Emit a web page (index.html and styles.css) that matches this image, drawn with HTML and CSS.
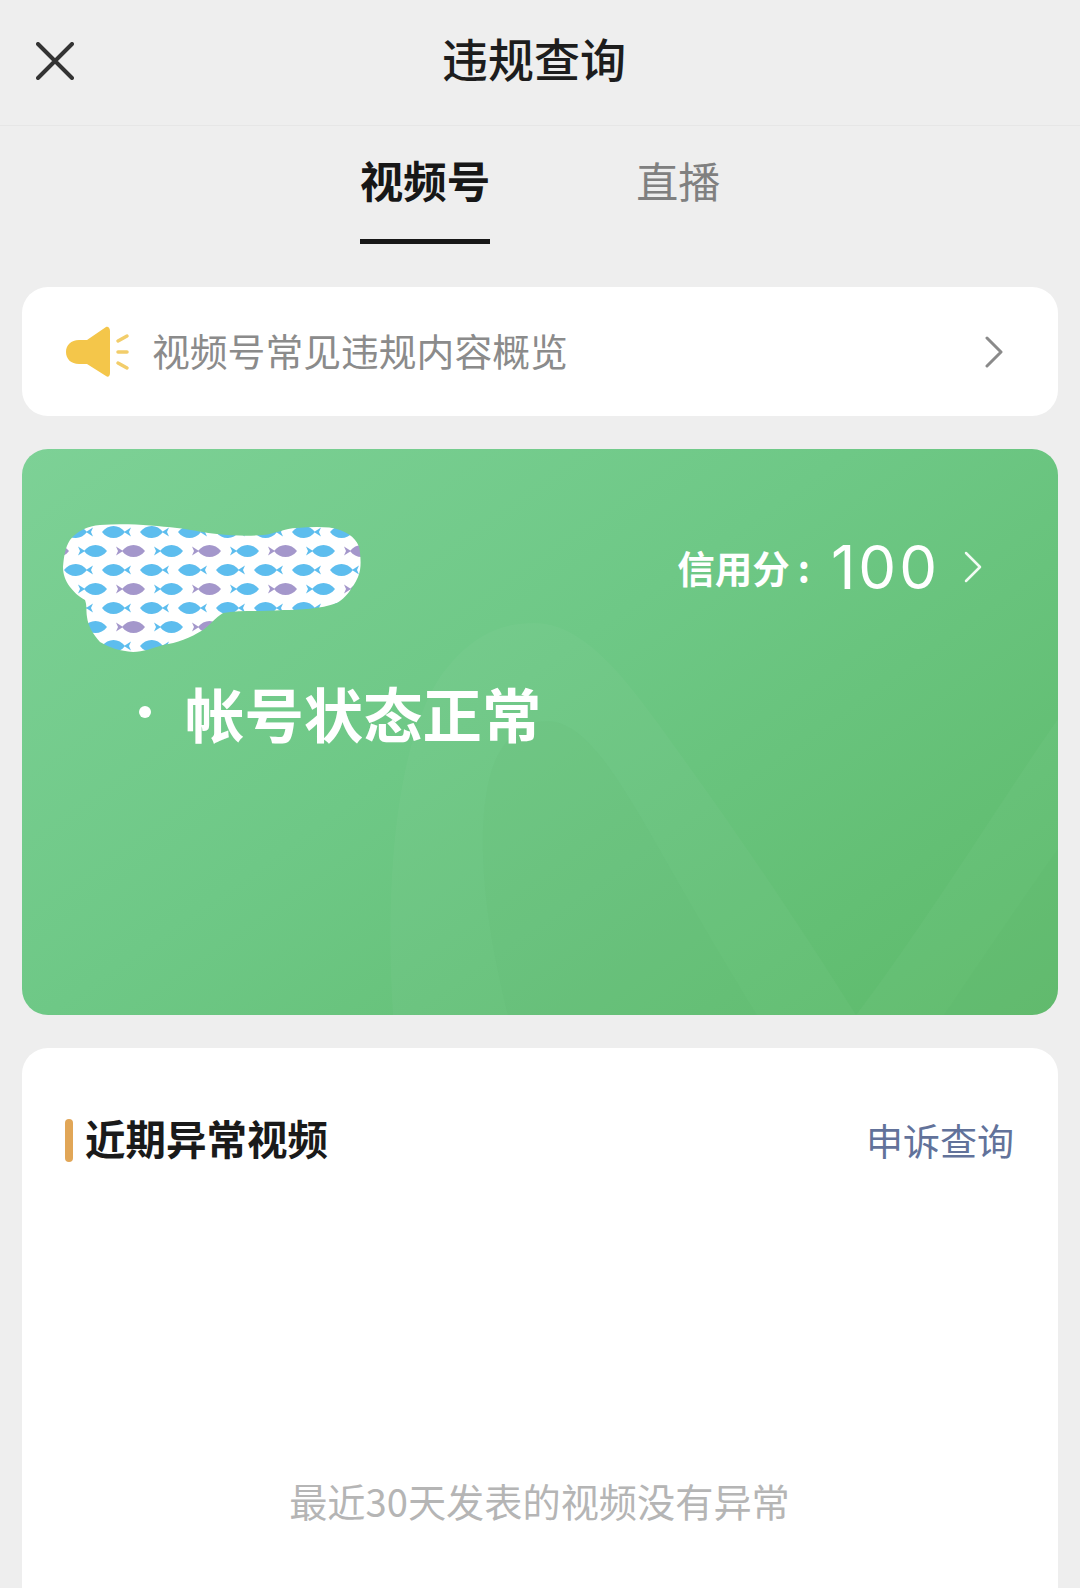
FILE: index.html
```html
<!DOCTYPE html>
<html lang="zh-CN">
<head>
<meta charset="utf-8">
<title>违规查询</title>
<link rel="stylesheet" href="styles.css">
</head>
<body>
<div class="page">
  <header class="topbar">
    <svg class="close" viewBox="0 0 38 38" aria-label="关闭"><path d="M2 2 L36 36 M36 2 L2 36"/></svg>
    <h1 class="title">违规查询</h1>
  </header>

  <nav class="tabs">
    <a class="tab tab-active">视频号</a>
    <a class="tab">直播</a>
  </nav>

  <main class="content">
    <section class="card notice">
      <svg class="horn" viewBox="0 0 64 52">
        <path class="horn-body" d="M40 1 C42 0 44 2 44 5 L44 47 C44 50 42 52 40 50 L21 38 L13 38 C5 38 0 33 0 26 C0 19 5 14 13 14 L21 14 Z"/>
        <path class="horn-ray" d="M52 15 L61 10 M52 26 L61 26 M52 37 L61 42"/>
      </svg>
      <span class="notice-text">视频号常见违规内容概览</span>
      <svg class="chev chev-grey" viewBox="0 0 18 32"><path d="M2 2 L16 16 L2 30"/></svg>
    </section>

    <section class="status">
      <svg class="status-bg" viewBox="0 0 1036 566" preserveAspectRatio="none">
        <path class="wave-light" d="M371 566 C362 430 375 290 420 225 C450 185 480 174 512 174 C560 174 600 225 640 280 C720 390 780 480 834 566 Z"/>
        <path class="wave-dark" d="M486 566 C462 470 452 380 470 320 C482 285 505 272 525 272 C560 272 590 320 620 370 C660 440 700 510 735 566 Z"/>
        <path class="wave-light" d="M834 566 C900 480 980 350 1036 270 L1036 566 Z"/>
        <path class="wave-dark" d="M922 566 C960 510 1000 450 1036 400 L1036 566 Z"/>
      </svg>
      <div class="status-top">
        <svg class="blob" viewBox="0 0 320 150">
          <defs>
            <path id="fish" d="M0 0 C6 -8 17 -8 23 0 C17 8 6 8 0 0 Z M22 0 L29 -4.5 L27 0 L29 4.5 Z"/>
            <pattern id="fishes" x="26" y="16" width="76" height="38" patternUnits="userSpaceOnUse">
              <rect width="76" height="38" fill="#fff"/>
              <use href="#fish" class="fish-blue" x="-12" y="6"/>
              <use href="#fish" class="fish-blue" x="26" y="6"/>
              <use href="#fish" class="fish-blue" x="64" y="6"/>
              <use href="#fish" class="fish-blue" transform="translate(31 25) scale(-1 1)"/>
              <use href="#fish" class="fish-purple" transform="translate(69 25) scale(-1 1)"/>
            </pattern>
          </defs>
          <path fill="url(#fishes)" d="M50 15 C80 13 105 16 127 18 C145 20 155 23 167 24 C185 26 200 26 213 25 C225 24 235 18 247 18 C262 17 278 16 290 20 C303 25 310 33 310 43 C311 52 311 60 308 67 C302 80 295 88 287 93 C270 99 250 100 233 100 C210 102 190 100 173 103 C165 108 160 115 153 120 C140 128 127 133 113 135 C103 138 93 142 83 142 C70 141 60 138 50 132 C43 124 38 116 37 107 C36 100 37 95 35 90 C28 86 24 82 20 77 C15 70 13 64 13 57 C14 46 15 38 20 30 C27 21 38 16 50 15 Z"/>
        </svg>
        <div class="score">
          <span class="score-label">信用分<span class="score-colon">:</span></span>
          <span class="score-num">100</span>
          <svg class="chev chev-white" viewBox="0 0 18 32"><path d="M2 2 L16 16 L2 30"/></svg>
        </div>
      </div>
      <div class="state">
        <span class="state-dot"></span>
        <span class="state-text">帐号状态正常</span>
      </div>
    </section>

    <section class="card recent">
      <div class="recent-head">
        <div class="recent-title"><span class="recent-bar"></span><h2>近期异常视频</h2></div>
        <a class="appeal">申诉查询</a>
      </div>
      <p class="empty">最近30天发表的视频没有异常</p>
    </section>
  </main>
</div>
</body>
</html>
```
FILE: styles.css
```css
* { box-sizing: border-box; margin: 0; padding: 0; }
html, body { height: 100%; }
body {
  background: #eeeeee;
  font-family: "Noto Sans CJK SC", "Noto Sans", sans-serif;
  overflow: hidden;
}
.page { height: 1588px; overflow: hidden; }

.topbar {
  height: 126px;
  border-bottom: 1px solid #e6e6e6;
  padding-left: 36px;
  display: grid;
  grid-template-columns: 38px 1fr 86px;
  align-items: center;
  padding-bottom: 4px;
}
.close { width: 38px; height: 38px; }
.close path { fill: none; stroke: #333; stroke-width: 4; stroke-linecap: round; }
.title {
  font-size: 46px;
  font-weight: 500;
  line-height: 60px;
  margin-top: -8px;
  text-align: center;
  color: #1d1d1d;
}

.tabs {
  height: 119px;
  display: flex;
  justify-content: center;
  gap: 146px;
}
.tab {
  height: 118px;
  padding-top: 21px;
  font-size: 42px;
  line-height: 66px;
  color: #808080;
}
.tab-active {
  font-size: 43.5px;
  font-weight: 700;
  color: #171717;
  position: relative;
}
.tab-active::after {
  content: "";
  position: absolute;
  left: 0;
  right: 0;
  top: 113px;
  height: 5px;
  background: #171717;
}

.content {
  padding: 42px 22px 0;
  display: flex;
  flex-direction: column;
  gap: 33px;
}
.card { background: #fff; border-radius: 26px; }

.notice {
  height: 129px;
  display: flex;
  align-items: center;
  padding: 0 55px 0 44px;
}
.horn { width: 64px; height: 52px; flex: none; }
.horn-body { fill: #f4c64a; }
.horn-ray { fill: none; stroke: #f2cd6a; stroke-width: 3.5; stroke-linecap: round; }
.notice-text {
  flex: 1;
  margin-left: 22px;
  margin-top: -4px;
  font-size: 37.8px;
  color: #8b8b8b;
  line-height: 56px;
}
.chev { fill: none; flex: none; }
.chev path { stroke-width: 3; stroke-linecap: round; stroke-linejoin: round; fill: none; }
.chev-grey { width: 18px; height: 32px; }
.chev-grey path { stroke: #8a8a8a; }
.chev-white { width: 18px; height: 32px; margin-left: 24px; }
.chev-white path { stroke: #f2fbf4; stroke-width: 2.5; }

.status {
  height: 566px;
  border-radius: 26px;
  background: linear-gradient(145deg, #7dd196 0%, #6ec886 45%, #5dba6a 100%);
  padding: 61px 76px 0 28px;
  position: relative;
  overflow: hidden;
}
.status-bg { position: absolute; inset: 0; width: 100%; height: 100%; }
.wave-light { fill: #ffffff; opacity: 0.03; }
.wave-dark { fill: #52b060; opacity: 0.07; }
.status-top {
  position: relative;
  display: flex;
  justify-content: space-between;
  align-items: flex-start;
}
.blob { width: 320px; height: 150px; flex: none; }
.fish-blue { fill: #5dbdee; }
.fish-purple { fill: #a497cb; }
.score {
  display: flex;
  align-items: center;
  height: 114px;
  color: #fff;
}
.score-label { font-size: 37.5px; font-weight: 700; line-height: 50px; }
.score-colon { margin-left: 8px; }
.score-num {
  font-family: "Inter", "Noto Sans", sans-serif;
  font-size: 60px;
  font-weight: 400;
  line-height: 70px;
  letter-spacing: 3px;
  margin-left: 21px;
}
.state {
  position: relative;
  display: flex;
  align-items: center;
  margin-top: 12px;
  padding-left: 89px;
  color: #fff;
}
.state-dot {
  width: 12px;
  height: 12px;
  border-radius: 50%;
  background: #fff;
  margin-right: 34px;
}
.state-text { font-size: 59.4px; font-weight: 700; line-height: 80px; }

.recent {
  height: 900px;
  padding: 70px 44px 0 43px;
}
.recent-head { display: flex; justify-content: space-between; align-items: center; height: 44px; }
.recent-title { display: flex; align-items: center; gap: 12px; }
.recent-bar { width: 8px; height: 43px; border-radius: 4px; background: #e1a657; }
.recent-title h2 { font-size: 40.5px; font-weight: 700; line-height: 44px; margin-top: -4px; color: #1a1a1a; }
.appeal { font-size: 37px; line-height: 44px; color: #62729a; }
.empty {
  margin-top: 314px;
  text-align: center;
  font-size: 38.2px;
  line-height: 50px;
  color: #b5b5b5;
}
```
